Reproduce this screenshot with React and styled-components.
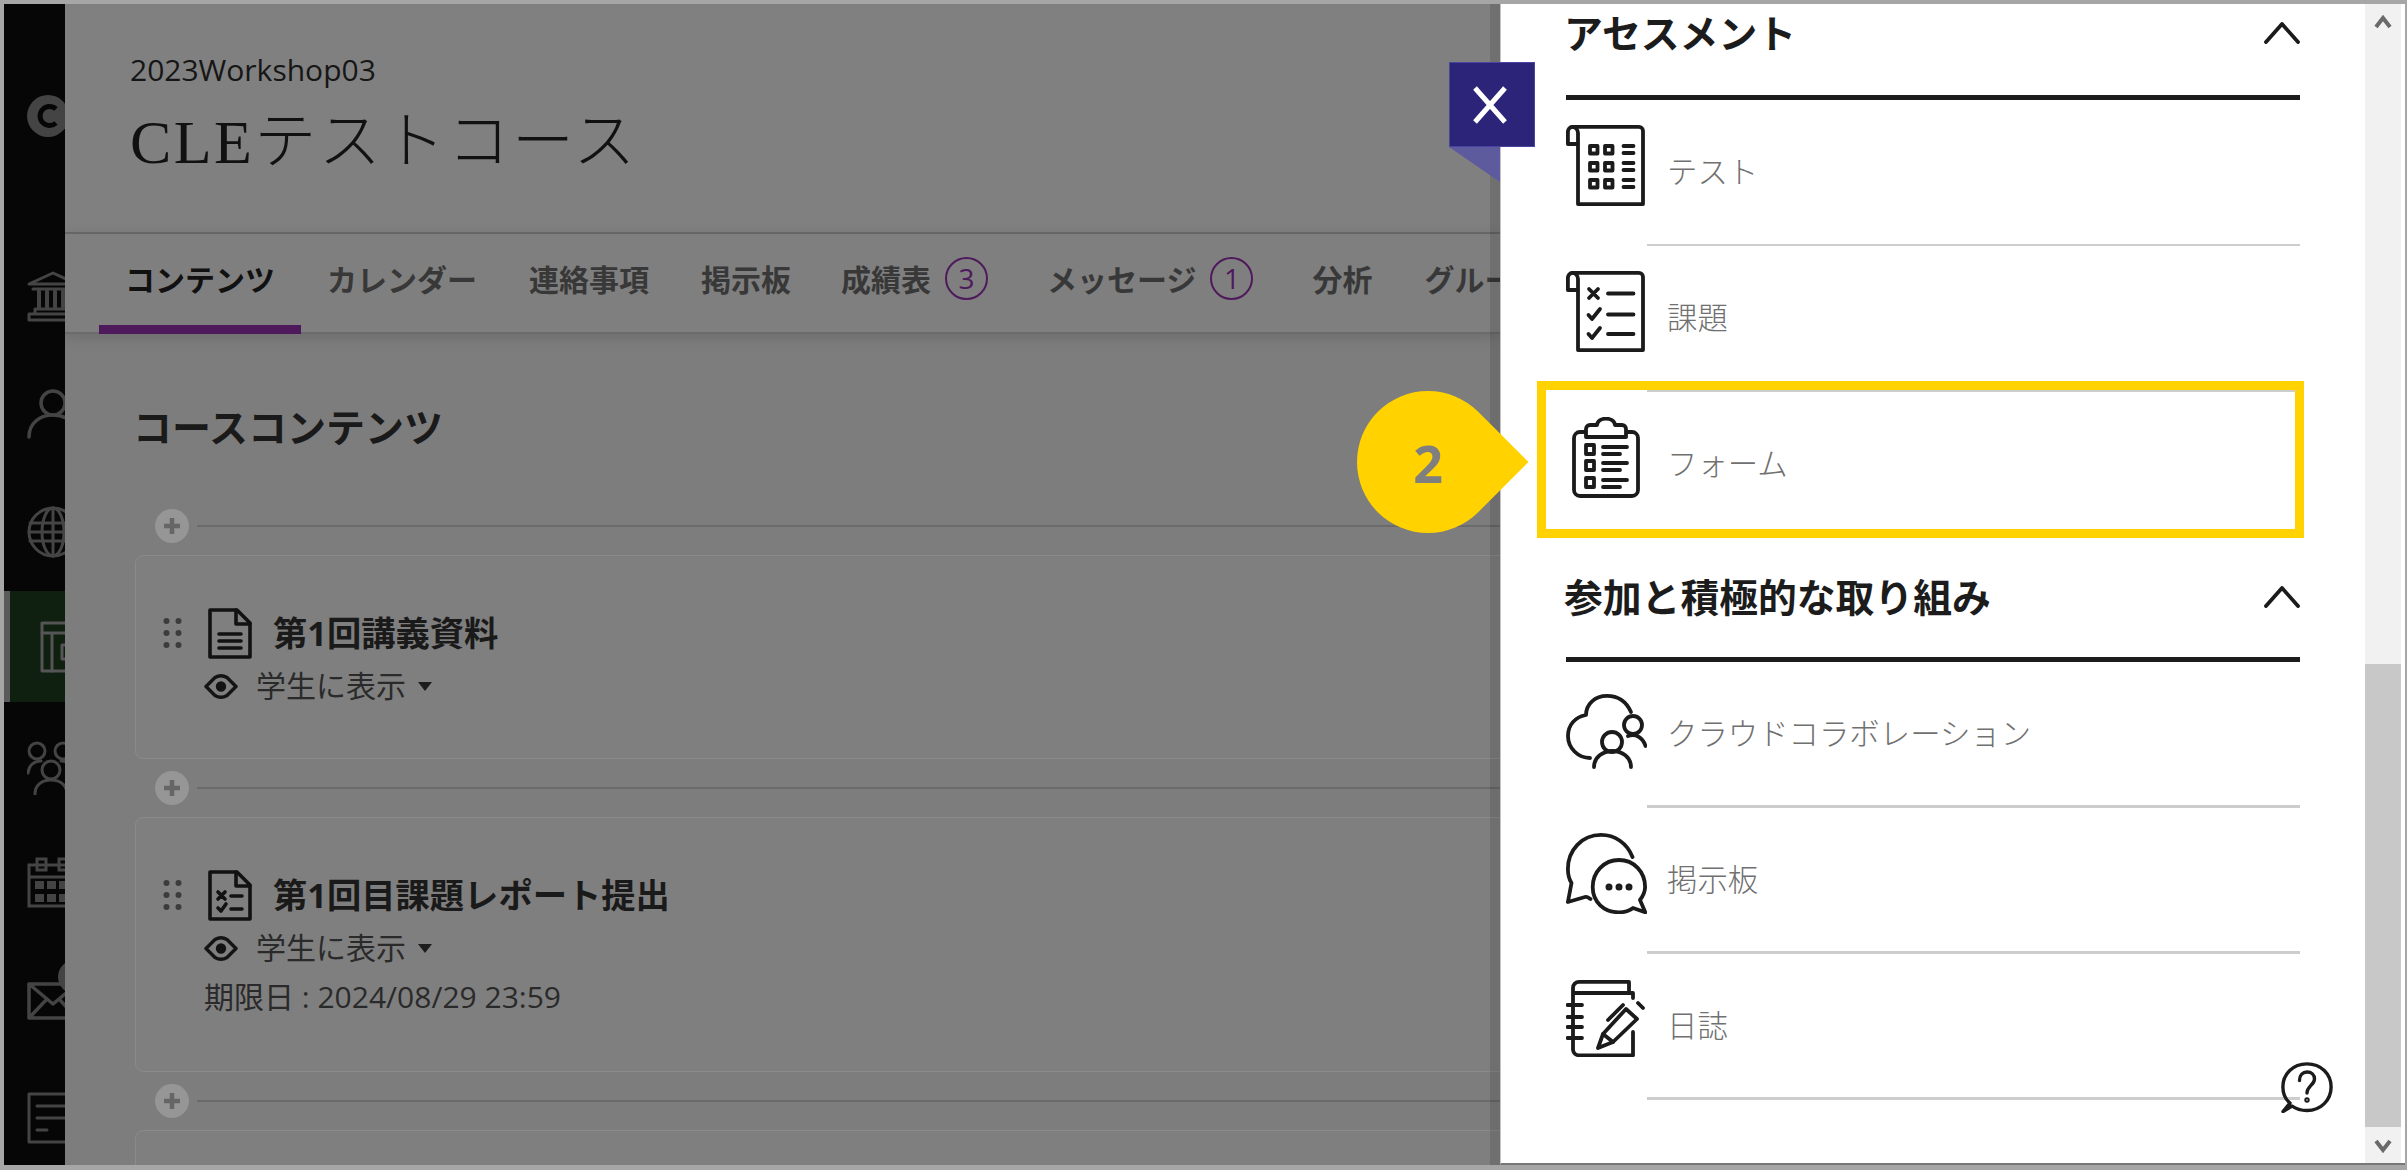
import React from "react";
import styled, { createGlobalStyle } from "styled-components";

const FONT = `"Open Sans", "Noto Sans CJK JP", sans-serif`;

const Global = createGlobalStyle`
  html, body { margin: 0; padding: 0; background: #a6a6a6; overflow: hidden; }
  * { box-sizing: border-box; }
`;

const Frame = styled.div`
  position: relative;
  width: 2407px;
  height: 1170px;
  display: flex;
  overflow: hidden;
  border-style: solid;
  border-color: #a6a6a6;
  border-width: 4px 2px 5px 4px;
  font-family: ${FONT};
  background: #fff;
`;

/* rail */
const Rail = styled.nav`
  width: 61px;
  flex: none;
  background: #060606;
  overflow: hidden;
  display: flex;
  flex-direction: column;
`;
const RailLogo = styled.div`
  height: 234px;
  padding: 91px 0 0 23px;
`;
const RailItem = styled.div`
  height: ${(p) => p.$h}px;
  flex: none;
  display: flex;
  align-items: center;
  padding-left: ${(p) => (p.$active ? 30 : 23)}px;
  background: ${(p) => (p.$active ? "#0f1f10" : "transparent")};
  border-left: ${(p) => (p.$active ? "6px solid #5a5a5a" : "0")};
  position: relative;
  svg { flex: none; display: block; }
`;
const MailDot = styled.span`
  position: absolute;
  left: 54px;
  top: 28px;
  width: 34px;
  height: 34px;
  border-radius: 50%;
  background: #444;
`;

/* main */
const Main = styled.main`
  width: 1435px;
  flex: none;
  background: #7d7d7d;
  overflow: hidden;
  display: flex;
  flex-direction: column;
`;
const CourseHeader = styled.header`
  height: 230px;
  flex: none;
  background: #808080;
  border-bottom: 2px solid #6a6a6a;
  padding: 47px 0 0 65px;
`;
const CourseCode = styled.div`
  font-size: 30px;
  line-height: 38px;
  color: #161616;
`;
const CourseTitle = styled.h1`
  margin: 15px 0 0;
  font-size: 62px;
  line-height: 76px;
  font-weight: 300;
  color: #111;
  white-space: nowrap;
  font-family: "Liberation Serif", "Noto Sans CJK JP", serif;
  letter-spacing: 2.4px;
`;
const TabBar = styled.div`
  height: 100px;
  flex: none;
  display: flex;
  padding-left: 34px;
  background: #7f7f7f;
  border-bottom: 2px solid #6b6b6b;
  box-shadow: 0 3px 14px rgba(0, 0, 0, 0.14);
  position: relative;
`;
const Tab = styled.div`
  display: flex;
  align-items: center;
  gap: 14px;
  height: 100px;
  padding: 0 26px 12px;
  margin-left: ${(p) => p.$pull || 0}px;
  font-size: 30px;
  white-space: nowrap;
  font-weight: 700;
  color: ${(p) => (p.$active ? "#111" : "#383838")};
  position: relative;
  flex: none;
  &::after {
    content: "";
    display: ${(p) => (p.$active ? "block" : "none")};
    position: absolute;
    left: 0;
    right: 0;
    bottom: 0;
    height: 9px;
    background: #4f1a5c;
  }
`;
const Badge = styled.span`
  width: 43px;
  height: 43px;
  border-radius: 50%;
  border: 2px solid #4f1a5c;
  color: #4f1a5c;
  font-size: 28px;
  font-weight: 400;
  display: flex;
  align-items: center;
  justify-content: center;
  margin-right: 7px;
`;
const Content = styled.section`
  width: 1500px;
  padding-left: 70px;
  flex: 1;
`;
const ContentTitle = styled.h2`
  margin: 67px 0 44px -2px;
  font-size: 39px;
  line-height: 52px;
  font-weight: 700;
  color: #1a1a1a;
`;
const Inserter = styled.div`
  height: 58px;
  display: flex;
  align-items: center;
  gap: 8px;
  padding-left: 20px;
  &::after {
    content: "";
    flex: 1;
    height: 2px;
    background: #6a6a6a;
  }
`;
const PlusButton = styled.span`
  width: 34px;
  height: 34px;
  border-radius: 50%;
  background: #969696;
  display: flex;
  align-items: center;
  justify-content: center;
  flex: none;
`;
const Card = styled.article`
  height: ${(p) => p.$h}px;
  border: 1px solid #8a8a8a;
  border-radius: 8px;
  background: #7f7f7f;
  padding: 52px 0 0 27px;
`;
const CardHead = styled.div`
  display: flex;
  align-items: center;
  height: 51px;
`;
const CardTitle = styled.h3`
  margin: 0 0 5px 21px;
  font-size: 34.3px;
  font-weight: 700;
  color: #1a1a1a;
  white-space: nowrap;
`;
const Meta = styled.div`
  height: 30px;
  margin: ${(p) => p.$top}px 0 0 41px;
  display: flex;
  align-items: center;
  font-size: 30px;
  color: #2a2a2a;
  white-space: nowrap;
`;
const MetaLabel = styled.span`
  margin: -5px 0 0 -1px;
`;
const MetaDate = styled(Meta)`
  padding-bottom: 6px;
`;
const EyeWrap = styled.span`
  width: 53px;
  flex: none;
  display: flex;
`;
const Caret = styled.span`
  margin-left: 12px;
  border-left: 7.5px solid transparent;
  border-right: 7.5px solid transparent;
  border-top: 9px solid #1d1d1d;
`;

/* panel */
const Panel = styled.aside`
  width: 865px;
  flex: none;
  position: relative;
  z-index: 2;
  background: #fff;
  padding: 0 65px;
  box-shadow: -10px 0 0 rgba(0, 0, 0, 0.12);
  border-left: 1px solid #c4c4c4;
  border-bottom: 2px solid #777;
`;
const CloseTab = styled.button`
  position: absolute;
  left: -52px;
  top: 58px;
  width: 86px;
  height: 85px;
  padding: 0 4px 0 0;
  border: 1px solid #4a45a0;
  background: #2b2478;
  display: flex;
  align-items: center;
  justify-content: center;
  z-index: 3;
`;
const CloseFold = styled.span`
  position: absolute;
  left: -52px;
  top: 143px;
  width: 0;
  height: 0;
  border-top: 35px solid #5e5a9e;
  border-left: 51px solid transparent;
  z-index: 3;
`;
const SectionHead = styled.div`
  height: ${(p) => p.$h}px;
  margin-top: ${(p) => p.$top || 0}px;
  display: flex;
  align-items: center;
  justify-content: space-between;
  border-bottom: 5px solid #1c1c1c;
  svg { margin-top: -2px; }
`;
const SectionTitle = styled.h2`
  margin: -5px 0 0 -2px;
  font-size: 38.8px;
  font-weight: 700;
  color: #1c1c1c;
  white-space: nowrap;
`;
const Row = styled.div`
  position: relative;
  height: 146px;
  display: flex;
`;
const IconSlot = styled.div`
  width: 81px;
  flex: none;
  padding: ${(p) => p.$top || 25}px 0 0 ${(p) => p.$left || 0}px;
  svg { display: block; }
`;
const RowBody = styled.div`
  flex: 1;
  display: flex;
  align-items: center;
  padding: 0 0 ${(p) => (p.$line ? 3 : 5)}px 20px;
  border-bottom: ${(p) => p.$line || 2}px solid #cdcdcd;
  font-size: 30.4px;
  font-weight: 300;
  color: #707070;
  white-space: nowrap;
`;
const Highlight = styled.div`
  position: absolute;
  left: -29px;
  right: -4px;
  top: -11px;
  bottom: 0;
  border: 9px solid #ffd200;
  pointer-events: none;
`;
const Callout = styled.div`
  position: absolute;
  left: -189px;
  top: 1px;
  width: 142px;
  height: 142px;
  display: flex;
  align-items: center;
  justify-content: center;
  font-size: 52px;
  font-weight: 700;
  color: #7f7f7f;
  &::before {
    content: "";
    position: absolute;
    inset: 0;
    background: #ffd200;
    border-radius: 50% 0 50% 50%;
    transform: rotate(45deg);
  }
`;
const CalloutNumber = styled.span`
  position: relative;
`;
const HelpButton = styled.div`
  position: absolute;
  left: 780px;
  top: 1058px;
  width: 52px;
  height: 51px;
  svg { display: block; }
`;

/* scrollbar */
const Scrollbar = styled.div`
  width: 36px;
  flex: none;
  display: flex;
  flex-direction: column;
  background: #f1f1f1;
  border-bottom: 2px solid #777;
`;
const ScrollButton = styled.div`
  height: 36px;
  flex: none;
  display: flex;
  justify-content: center;
  align-items: ${(p) => (p.$down ? "flex-start" : "flex-end")};
  padding: ${(p) => (p.$down ? "12px 0 0" : "0 0 11px")};
`;
const ScrollTrack = styled.div`
  flex: 1;
`;
const ScrollThumb = styled.div`
  height: 463px;
  flex: none;
  background: #c8c8c8;
`;
const RightEdge = styled.div`
  width: 4px;
  flex: none;
  background: #fff;
  border-bottom: 2px solid #777;
`;

/* drawings */
const Ic = ({ w, h, sw = 3.8, c = "#1b1b1b", children }) => (
  <svg width={w} height={h} viewBox={`0 0 ${w} ${h}`} fill="none" stroke={c} strokeWidth={sw} strokeLinecap="round" strokeLinejoin="round">
    {children}
  </svg>
);

const Scroll = () => (
  <>
    <path d="M6 1.9H73a4 4 0 0 1 4 4V79.1H12V8A6.3 6.3 0 0 0 6 1.9Z" />
    <path d="M6 1.9A5 5 0 0 0 1.9 7V19H11.5" />
  </>
);

const TestIcon = () => (
  <Ic w={79} h={81}>
    <Scroll />
    {[21, 38, 55].map((y) => (
      <g key={y}>
        <rect x="24" y={y} width="7.5" height="7.5" />
        <rect x="39" y={y} width="7.5" height="7.5" />
        <path d={`M57.5 ${y}H67.5M57.5 ${y + 7}H67.5`} />
      </g>
    ))}
  </Ic>
);
const AssignIcon = () => (
  <Ic w={79} h={81}>
    <Scroll />
    <path d="M23 18L32 27M32 18L23 27M42 22.5H67.5" />
    <path d="M22.5 44L26 48L34 38M42 43.5H67.5" />
    <path d="M22.5 63L26 67L34 57M42 63H67.5" />
  </Ic>
);
const FormIcon = () => (
  <Ic w={68} h={81}>
    <path d="M12 15H8A6 6 0 0 0 2 21V73A6 6 0 0 0 8 79H60A6 6 0 0 0 66 73V21A6 6 0 0 0 60 15H56" />
    <path d="M18 8H25C26 -0.5 42 -0.5 43 8H50A4 4 0 0 1 54 12V20H14V12A4 4 0 0 1 18 8Z" />
    {[28, 44, 61].map((y) => (
      <g key={y}>
        <rect x="14" y={y} width="8" height="9" />
        <path d={`M31 ${y + 2}H55M31 ${y + 9}H48`} />
      </g>
    ))}
  </Ic>
);
const CloudIcon = () => (
  <Ic w={81} h={75}>
    <path d="M65 18C60 7 51 1.9 41 1.9C29 1.9 20 10 20 21C9 23 2 31 2 42C2 54 12 64 24 64" />
    <circle cx="46" cy="48" r="10" />
    <path d="M28 73C28 63 37 57 46.5 57C56 57 65 63 65 73" />
    <circle cx="67" cy="31" r="9" />
    <path d="M62 42C70 39 77 44 79.5 52" />
  </Ic>
);
const ChatIcon = () => (
  <Ic w={81} h={81}>
    <path d="M66.5 24C61 10 49 1.9 35 1.9C16 1.9 1.9 17 1.9 36C1.9 41 3 46 5.5 50L1.9 69L19 64C21 63 23 65 24.5 66" />
    <path d="M74 67C77 63 79.1 59 79.1 54C79.1 39 68 27 53 27C38 27 26.7 39 26.7 54C26.7 69 38 79.3 53 79.3C58 79.3 63 78 67 75L79.3 79.3Z" />
    <circle cx="43" cy="54" r="1.6" />
    <circle cx="53" cy="54" r="1.6" />
    <circle cx="63" cy="54" r="1.6" />
  </Ic>
);
const JournalIcon = () => (
  <Ic w={79} h={77}>
    <path d="M63 12V1.9H13A6 6 0 0 0 7 8V70A6 6 0 0 0 13 75.3H67V52" />
    <path d="M8 13H67V18" />
    <path d="M1.5 25H16M1.5 37H16M1.5 47H16M1.5 58H16" />
    <path d="M32 68L37 54L60 29L71 39L47 62Z" />
    <path d="M37 54L47 62M42 40L57 25M72 23L77 28" />
  </Ic>
);
const HelpIcon = () => (
  <Ic w={52} h={51} sw={3.4}>
    <path d="M9 41C4 37 1.9 31 1.9 25C1.9 12 12 1.9 26 1.9C40 1.9 50.1 12 50.1 25C50.1 38 40 48.5 26 48.5C20 48.5 15 47 11 44L2 49.5Z" />
    <path d="M18.5 18.5C18.5 13 22 10 26 10C30.5 10 33.5 13 33.5 17C33.5 23 26 24 26 31" />
    <circle cx="26" cy="38" r="1" />
  </Ic>
);
const Chevron = () => (
  <Ic w={36} h={22} sw={3.8}>
    <path d="M2 20L18 2L34 20" />
  </Ic>
);
const DocFile = () => (
  <Ic w={44} h={51} sw={3.6} c="#121212">
    <path d="M2 2H29L42 15V49H2Z" />
    <path d="M28 2V16H42" />
    <path d="M11 26H33M11 33H33M11 40H33" />
  </Ic>
);
const DocTask = () => (
  <Ic w={44} h={51} sw={3.6} c="#121212">
    <path d="M2 2H29L42 15V49H2Z" />
    <path d="M28 2V16H42" />
    <path d="M10 22L17 29M17 22L10 29M23 26H34" />
    <path d="M10 38L13 41L18 34M23 39H34" />
  </Ic>
);
const Eye = () => (
  <svg width="34" height="25" viewBox="0 0 34 25" fill="none" stroke="#141414" strokeWidth="3.4">
    <path d="M2 12.5L11 3.5Q17 0 23 3.5L32 12.5L23 21.5Q17 25 11 21.5Z" strokeLinejoin="round" />
    <circle cx="17" cy="12.5" r="3.5" fill="#141414" />
  </svg>
);
const Handle = () => (
  <svg width="19" height="31" viewBox="0 0 19 31" fill="#3c3c3c" style={{ marginRight: 26, flex: "none" }}>
    {[3, 15, 27].map((y) => (
      <g key={y}>
        <circle cx="3.5" cy={y} r="3" />
        <circle cx="15.5" cy={y} r="3" />
      </g>
    ))}
  </svg>
);
const Plus = () => (
  <svg width="18" height="18" viewBox="0 0 18 18" stroke="#666" strokeWidth="4.5">
    <path d="M9 1V17M1 9H17" />
  </svg>
);
const Close = () => (
  <svg width="34" height="38" viewBox="0 0 34 38" stroke="#fff" strokeWidth="5">
    <path d="M2 2L32 36M32 2L2 36" />
  </svg>
);
const ScrollArrow = ({ down }) => (
  <svg width="18" height="14" viewBox="0 0 18 14" fill="none" stroke="#6a6a6a" strokeWidth="4">
    <path d={down ? "M2 2L9 11L16 2" : "M2 12L9 3L16 12"} />
  </svg>
);
const G = "#444";
const RailC = () => (
  <svg width="50" height="42" viewBox="0 0 50 42">
    <circle cx="21" cy="21" r="21" fill={G} />
    <path d="M29 14A9.5 9.5 0 1 0 29 28" fill="none" stroke="#060606" strokeWidth="5" />
  </svg>
);
const RailBank = () => (
  <Ic w={52} h={52} c={G} sw={3}>
    <path d="M26 2L50 13H2ZM6 18H46M2 49H50V43H2ZM8 43V38H44V43" />
    <path d="M12 20V36M20 20V36M28 20V36M36 20V36" strokeWidth="4" />
  </Ic>
);
const RailPerson = () => (
  <Ic w={52} h={50} c={G} sw={3.5}>
    <circle cx="26" cy="14" r="12" />
    <path d="M2 48C2 34 13 26 26 26C39 26 50 34 50 48" />
  </Ic>
);
const RailGlobe = () => (
  <Ic w={52} h={52} c={G} sw={3}>
    <circle cx="26" cy="26" r="24" />
    <ellipse cx="26" cy="26" rx="11" ry="24" />
    <path d="M26 2V50M3 17H49M2 26H50M3 35H49" />
  </Ic>
);
const RailCourse = () => (
  <Ic w={52} h={52} c="#555" sw={3}>
    <rect x="2" y="2" width="48" height="48" />
    <path d="M2 12H50M12 12V50M22 24H40V38H22Z" />
  </Ic>
);
const RailPeople = () => (
  <Ic w={52} h={55} c={G} sw={3}>
    <circle cx="10" cy="11" r="8" />
    <circle cx="36" cy="11" r="8" />
    <circle cx="24" cy="30" r="9" />
    <path d="M1 33C2 24 8 21 14 21M34 21C40 21 46 24 48 33M8 54C8 45 15 40 24 40C33 40 40 45 40 54" />
  </Ic>
);
const RailCalendar = () => (
  <svg width="52" height="51" viewBox="0 0 52 51" fill="none" stroke={G} strokeWidth="3">
    <rect x="2" y="8" width="48" height="41" />
    <path d="M2 20H50" />
    <rect x="10" y="2" width="9" height="11" />
    <rect x="32" y="2" width="9" height="11" />
    <g fill={G} stroke="none">
      {[24, 37].map((y) =>
        [8, 20, 32].map((x) => <rect key={x + "-" + y} x={x} y={y} width="9" height="8" />)
      )}
    </g>
  </svg>
);
const RailMail = () => (
  <Ic w={52} h={38} c={G} sw={3.5}>
    <path d="M2 2H50V36H2ZM2 2L26 22L50 2M2 36L20 17M50 36L32 17" />
  </Ic>
);
const RailGrade = () => (
  <Ic w={52} h={52} c={G} sw={3}>
    <path d="M2 2H50V50H2Z" />
    <path d="M10 14H38M10 26H38M10 38H20" />
  </Ic>
);

const assessment = [
  { label: "テスト", icon: <TestIcon /> },
  { label: "課題", icon: <AssignIcon /> },
];
const engagement = [
  { label: "クラウドコラボレーション", icon: <CloudIcon />, top: 32 },
  { label: "掲示板", icon: <ChatIcon /> },
  { label: "日誌", icon: <JournalIcon />, top: 26 },
];

export default function App() {
  return (
    <>
      <Global />
      <Frame>
        <Rail>
          <RailLogo><RailC /></RailLogo>
          <RailItem $h={117}><RailBank /></RailItem>
          <RailItem $h={117}><RailPerson /></RailItem>
          <RailItem $h={119}><RailGlobe /></RailItem>
          <RailItem $h={111} $active><RailCourse /></RailItem>
          <RailItem $h={130}><RailPeople /></RailItem>
          <RailItem $h={100}><RailCalendar /></RailItem>
          <RailItem $h={138}>
            <RailMail />
            <MailDot />
          </RailItem>
          <RailItem $h={95}><RailGrade /></RailItem>
        </Rail>

        <Main>
          <CourseHeader>
            <CourseCode>2023Workshop03</CourseCode>
            <CourseTitle>CLEテストコース</CourseTitle>
          </CourseHeader>
          <TabBar>
            <Tab $active>コンテンツ</Tab>
            <Tab>カレンダー</Tab>
            <Tab>連絡事項</Tab>
            <Tab>掲示板</Tab>
            <Tab $pull={-2}>成績表<Badge>3</Badge></Tab>
            <Tab>メッセージ<Badge>1</Badge></Tab>
            <Tab>分析</Tab>
            <Tab>グループ</Tab>
          </TabBar>
          <Content>
            <ContentTitle>コースコンテンツ</ContentTitle>
            <Inserter><PlusButton><Plus /></PlusButton></Inserter>
            <Card $h={204}>
              <CardHead>
                <Handle />
                <DocFile />
                <CardTitle>第1回講義資料</CardTitle>
              </CardHead>
              <Meta $top={12}>
                <EyeWrap><Eye /></EyeWrap>
                <MetaLabel>学生に表示</MetaLabel>
                <Caret />
              </Meta>
            </Card>
            <Inserter><PlusButton><Plus /></PlusButton></Inserter>
            <Card $h={255}>
              <CardHead>
                <Handle />
                <DocTask />
                <CardTitle>第1回目課題レポート提出</CardTitle>
              </CardHead>
              <Meta $top={12}>
                <EyeWrap><Eye /></EyeWrap>
                <MetaLabel>学生に表示</MetaLabel>
                <Caret />
              </Meta>
              <MetaDate $top={20}>期限日 : 2024/08/29 23:59</MetaDate>
            </Card>
            <Inserter><PlusButton><Plus /></PlusButton></Inserter>
            <Card $h={120} />
          </Content>
        </Main>

        <Panel>
          <CloseTab aria-label="閉じる"><Close /></CloseTab>
          <CloseFold />
          <SectionHead $h={128} $top={-32}>
            <SectionTitle>アセスメント</SectionTitle>
            <Chevron />
          </SectionHead>
          {assessment.map((it) => (
            <Row key={it.label}>
              <IconSlot>{it.icon}</IconSlot>
              <RowBody>{it.label}</RowBody>
            </Row>
          ))}
          <Row>
            <IconSlot $left={6}><FormIcon /></IconSlot>
            <RowBody>フォーム</RowBody>
            <Highlight>
              <Callout><CalloutNumber>2</CalloutNumber></Callout>
            </Highlight>
          </Row>
          <SectionHead $h={124}>
            <SectionTitle>参加と積極的な取り組み</SectionTitle>
            <Chevron />
          </SectionHead>
          {engagement.map((it) => (
            <Row key={it.label}>
              <IconSlot $top={it.top}>{it.icon}</IconSlot>
              <RowBody $line={3}>{it.label}</RowBody>
            </Row>
          ))}
          <HelpButton><HelpIcon /></HelpButton>
        </Panel>

        <Scrollbar>
          <ScrollButton><ScrollArrow /></ScrollButton>
          <ScrollTrack />
          <ScrollThumb />
          <ScrollButton $down><ScrollArrow down /></ScrollButton>
        </Scrollbar>
        <RightEdge />
      </Frame>
    </>
  );
}
